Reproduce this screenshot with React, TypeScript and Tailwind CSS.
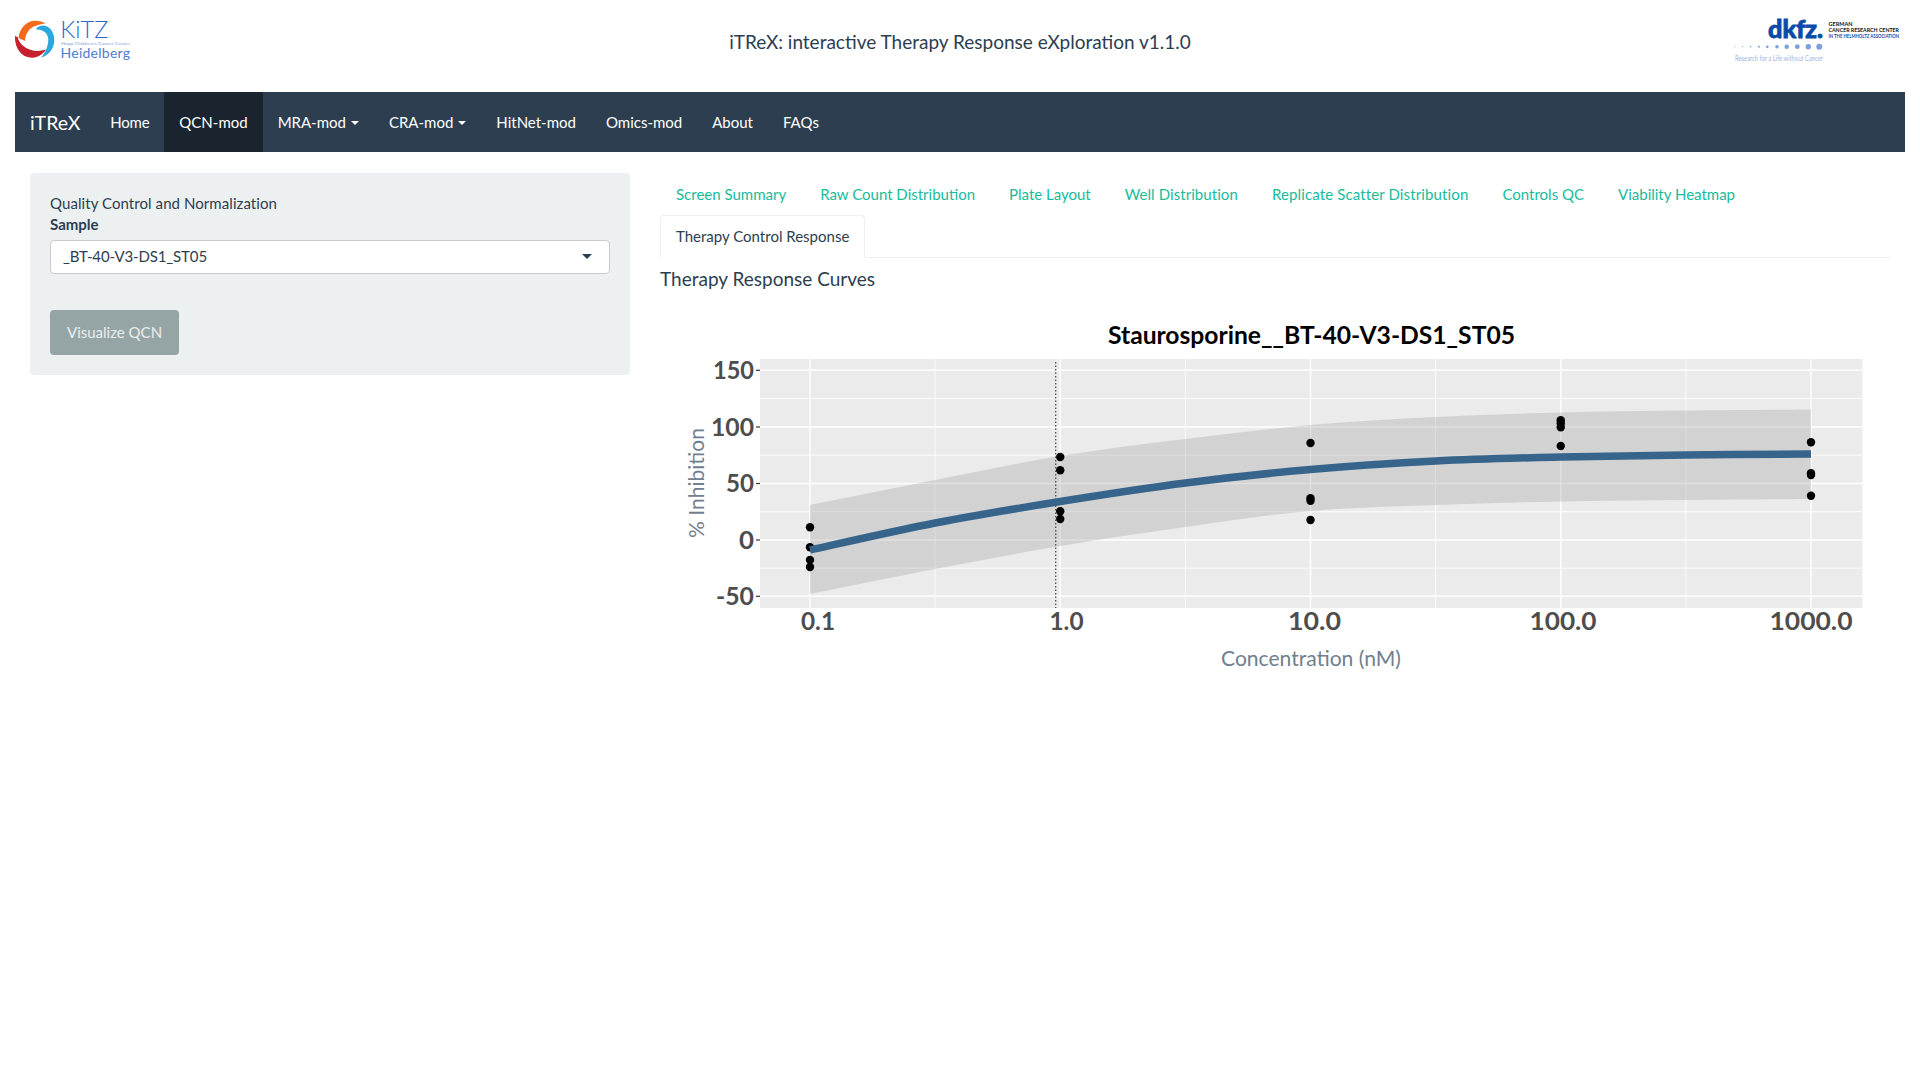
import React from "react";

type P = [number, number];
const smooth = (pts: P[]) => {
  let d = `M${pts[0][0]},${pts[0][1]}`;
  for (let i = 0; i < pts.length - 1; i++) {
    const p0 = pts[Math.max(i - 1, 0)];
    const p1 = pts[i];
    const p2 = pts[i + 1];
    const p3 = pts[Math.min(i + 2, pts.length - 1)];
    d += ` C${p1[0] + (p2[0] - p0[0]) / 6},${p1[1] + (p2[1] - p0[1]) / 6} ${p2[0] - (p3[0] - p1[0]) / 6},${p2[1] - (p3[1] - p1[1]) / 6} ${p2[0]},${p2[1]}`;
  }
  return d;
};

const X0 = 810, X1 = 1060.25, X2 = 1310.5, X3 = 1560.75, X4 = 1811;
const xs = [X0, 935.1, X1, 1185.4, X2, 1435.6, X3, 1685.9, X4];
const upperY = [505, 480, 456, 439, 425, 417, 412.5, 410.5, 409.5];
const lineY = [550, 523, 501.5, 483, 469.5, 461, 457, 455, 454];
const lowerY = [594, 569, 546, 527, 511, 505, 501.5, 500, 499];
const zip = (ys: number[]): P[] => xs.map((x, i) => [x, ys[i]] as P);

const dots: P[] = [
  [X0, 527.3], [X0, 547.3], [X0, 560], [X0, 567],
  [X1, 457], [X1, 470.3], [X1, 511.3], [X1, 519],
  [X2, 443], [X2, 498.3], [X2, 500.7], [X2, 520],
  [X3, 420.3], [X3, 423.3], [X3, 427.3], [X3, 446],
  [X4, 442.3], [X4, 473.3], [X4, 475], [X4, 495.7],
];

const yMajor: [number, string, number][] = [[370.3, "150", 41], [427, "100", 43], [483.5, "50", 28], [540, "0", 15], [596.3, "-50", 38]];
const yMinor = [398.6, 455.2, 511.7, 568.2];
const xMajor: [number, string, number, number][] = [
  [X0, "0.1", 818, 34],
  [X1, "1.0", 1066.5, 34],
  [X2, "10.0", 1314.5, 53],
  [X3, "100.0", 1563, 67],
  [X4, "1000.0", 1811, 83],
];
const xMinor = [935.1, 1185.4, 1435.6, 1685.9];

function Chart() {
  const L = 760, R = 1862.5, T = 359, B = 608;
  const ribbon =
    smooth(zip(upperY)) +
    " L" + zip(lowerY).reverse()[0].join(",") +
    smooth(zip(lowerY).reverse()).replace(/^M[^ ]+/, "") + " Z";
  return (
    <svg width="1230" height="400" viewBox="660 300 1230 400" className="block">
      <text x="1311.5" y="344" textAnchor="middle" fontSize="24.5" fontWeight="700" fill="#000" fontFamily="Lato, sans-serif" textLength="407" lengthAdjust="spacingAndGlyphs">Staurosporine__BT-40-V3-DS1_ST05</text>
      <rect x={L} y={T} width={R - L} height={B - T} fill="#ebebeb" />
      {yMinor.map((y) => <line key={y} x1={L} x2={R} y1={y} y2={y} stroke="#fff" strokeWidth="0.8" />)}
      {xMinor.map((x) => <line key={x} x1={x} x2={x} y1={T} y2={B} stroke="#fff" strokeWidth="0.8" />)}
      {yMajor.map(([y]) => <line key={y} x1={L} x2={R} y1={y} y2={y} stroke="#fff" strokeWidth="1.4" />)}
      {xMajor.map(([x]) => <line key={x} x1={x} x2={x} y1={T} y2={B} stroke="#fff" strokeWidth="1.4" />)}
      <path d={ribbon} fill="#999" fillOpacity="0.3" />
      <line x1="1055.7" x2="1055.7" y1={362} y2={B} stroke="#444" strokeWidth="1.2" strokeDasharray="1.5 2" />
      {dots.map(([x, y], i) => <circle key={i} cx={x} cy={y} r="4.2" fill="#000" />)}
      <path d={smooth(zip(lineY))} fill="none" stroke="#36648b" strokeWidth="7.5" />
      {yMajor.map(([y, t, w]) => (
        <g key={t}>
          <line x1={756} x2={L} y1={y} y2={y} stroke="#333" strokeWidth="1.2" />
          <text x="754" y={y + 8.5} textAnchor="end" fontSize="24" fontWeight="700" fill="#4d4d4d" fontFamily="Lato, sans-serif" textLength={w} lengthAdjust="spacingAndGlyphs">{t}</text>
        </g>
      ))}
      {xMajor.map(([x, t, c, w]) => (
        <text key={x} x={c} y="630" textAnchor="middle" fontSize="24" fontWeight="700" fill="#4d4d4d" fontFamily="Lato, sans-serif" textLength={w} lengthAdjust="spacingAndGlyphs">{t}</text>
      ))}
      <text x="1311" y="666" textAnchor="middle" fontSize="21" fill="#708090" fontFamily="Lato, sans-serif" textLength="180" lengthAdjust="spacingAndGlyphs">Concentration (nM)</text>
      <text transform="translate(703.5,483) rotate(-90)" textAnchor="middle" fontSize="21" fill="#708090" fontFamily="Lato, sans-serif" textLength="110" lengthAdjust="spacingAndGlyphs">% Inhibition</text>
    </svg>
  );
}

function KitzLogo() {
  return (
    <svg width="120" height="50" viewBox="15 15 120 50" className="block overflow-visible">
      <path d="M18.5,38 C19.5,27 28,20 36,20.7 C39,20.8 43,21.5 45.5,23.5 C40,24 33,26 29,30 C26.5,33 25,37 25,41 Z" fill="#f26a1b" />
      <path d="M15,36 C14.5,46 20,57.5 32,57.7 C38,57.8 43,54 46,49.5 C41,51 36,51.5 31,50 C24,48 19,43 17.5,37 Z" fill="#c4202f" />
      <path d="M36.5,28 C40,24.5 46,24.5 49.5,28 C53.5,32 55,38 54,43 C53,50 48,55.5 41,57.8 C45,53 48,47 48.3,40 C48.5,36 46,32 42,30.5 C40,29.8 38,29.5 36.5,29.5 Z" fill="#29a8e0" />
      <text x="60.3" y="38" fontSize="23.5" fill="#2a66c4" fontFamily="Lato, sans-serif" fontWeight="300" textLength="48" lengthAdjust="spacing">KiTZ</text>
      <text x="61" y="45" fontSize="4.2" fill="#7f9fdc" fontFamily="Lato, sans-serif" textLength="69" lengthAdjust="spacingAndGlyphs">Hopp Children's Cancer Center</text>
      <text x="60.5" y="58" fontSize="14" fill="#4f7dd0" fontFamily="Lato, sans-serif" textLength="69.5" lengthAdjust="spacing">Heidelberg</text>
    </svg>
  );
}

function DkfzLogo() {
  const ds: [number, number][] = [[1735, 0.5], [1742.7, 0.6], [1750.7, 0.8], [1759, 1], [1767.3, 1.3], [1777, 1.8], [1786.7, 2.2], [1797.3, 2.4], [1808.3, 2.7], [1819.3, 3]];
  return (
    <svg width="180" height="50" viewBox="1725 15 180 50" className="block overflow-visible">
      <text x="1768" y="37.5" fontSize="25" fontWeight="900" fill="#0a4aa8" stroke="#0a4aa8" strokeWidth="0.8" fontFamily="Lato, sans-serif" textLength="55" lengthAdjust="spacingAndGlyphs">dkfz.</text>
      <text x="1828.5" y="25.5" fontSize="5.8" fontWeight="700" fill="#111" fontFamily="Lato, sans-serif" textLength="24" lengthAdjust="spacingAndGlyphs">GERMAN</text>
      <text x="1828.5" y="31.5" fontSize="5.8" fontWeight="700" fill="#111" fontFamily="Lato, sans-serif" textLength="70.5" lengthAdjust="spacingAndGlyphs">CANCER RESEARCH CENTER</text>
      <text x="1828.5" y="37.5" fontSize="5.4" fontWeight="700" fill="#0a4aa8" fontFamily="Lato, sans-serif" textLength="70.5" lengthAdjust="spacingAndGlyphs">IN THE HELMHOLTZ ASSOCIATION</text>
      {ds.map(([x, r]) => <circle key={x} cx={x} cy="46.7" r={r} fill="#7f9fdc" />)}
      <text x="1735" y="60.5" fontSize="6.6" fill="#9db6e4" fontFamily="Lato, sans-serif" textLength="88" lengthAdjust="spacingAndGlyphs">Research for a Life without Cancer</text>
    </svg>
  );
}

const Caret = () => (
  <span className="inline-block ml-[4px] w-0 h-0 border-x-[4px] border-x-transparent border-t-[4px] border-t-white" />
);

const navItems: { t: string; active?: boolean; caret?: boolean; cls?: string }[] = [
  { t: "Home", cls: "tracking-[-0.25px]" },
  { t: "QCN-mod", active: true },
  { t: "MRA-mod", caret: true },
  { t: "CRA-mod", caret: true },
  { t: "HitNet-mod" },
  { t: "Omics-mod" },
  { t: "About" },
  { t: "FAQs" },
];

const tabs: { t: string; cls?: string }[] = [
  { t: "Screen Summary" },
  { t: "Raw Count Distribution" },
  { t: "Plate Layout" },
  { t: "Well Distribution", cls: "tracking-[0.07px]" },
  { t: "Replicate Scatter Distribution", cls: "tracking-[0.13px]" },
  { t: "Controls QC" },
  { t: "Viability Heatmap" },
];

export default function App() {
  return (
    <div className="min-h-[1080px] bg-white px-[15px] text-[15px] leading-[21px] text-[#2c3e50] font-['Lato',sans-serif]">
      <header className="h-[92px] pt-[15px] grid grid-cols-[1fr_auto_1fr] items-start">
        <div className="justify-self-start"><KitzLogo /></div>
        <div className="text-[19px] leading-[21px] mt-[16px]">iTReX: interactive Therapy Response eXploration v1.1.0</div>
        <div className="justify-self-end"><DkfzLogo /></div>
      </header>

      <nav className="h-[60px] bg-[#2c3e50] flex items-stretch text-white mb-[21px]">
        <a className="px-[15px] flex items-center text-[19.5px]">iTReX</a>
        {navItems.map((n) => (
          <a key={n.t} className={`px-[15px] pt-[1px] flex items-center gap-[1px] ${n.active ? "bg-[#1a242f]" : ""}`}>
            <span className={n.cls}>{n.t}</span>
            {n.caret && <Caret />}
          </a>
        ))}
      </nav>

      <div className="flex">
        <div className="w-[630px] px-[15px] shrink-0">
          <div className="bg-[#ecf0f1] rounded-[4px] p-[20px] h-[202px]">
            <div className="tracking-[0.07px]">Quality Control and Normalization</div>
            <div className="font-bold mb-[5px]">Sample</div>
            <div className="h-[34px] bg-white rounded-[4px] border border-[#c8cccf] flex items-center justify-between pl-[12px] pr-[17px] pb-[2px]">
              <span className="tracking-[-0.13px]">_BT-40-V3-DS1_ST05</span>
              <span className="w-0 h-0 border-x-[5px] border-x-transparent border-t-[5px] border-t-[#2c3e50]" />
            </div>
            <button className="mt-[36px] h-[45px] px-[17px] rounded-[4px] bg-[#95a5a6] text-white/80 block">Visualize QCN</button>
          </div>
        </div>

        <div className="w-[1260px] px-[15px]">
          <div className="flex flex-wrap content-start border-b border-[#ecf0f1] h-[85px]">
            {tabs.map((t) => (
              <a key={t.t} className={`px-[16px] py-[10.5px] h-[42px] mr-[2px] text-[#18bc9c] ${t.cls ?? ""}`}>{t.t}</a>
            ))}
            <a className="px-[15px] py-[10px] h-[43px] bg-white border border-[#ecf0f1] border-b-white rounded-t-[4px] text-[#2c3e50]">Therapy Control Response</a>
          </div>
          <h4 className="text-[19px] leading-[21px] mt-[10px] mb-[11px]">Therapy Response Curves</h4>
          <Chart />
        </div>
      </div>
    </div>
  );
}
